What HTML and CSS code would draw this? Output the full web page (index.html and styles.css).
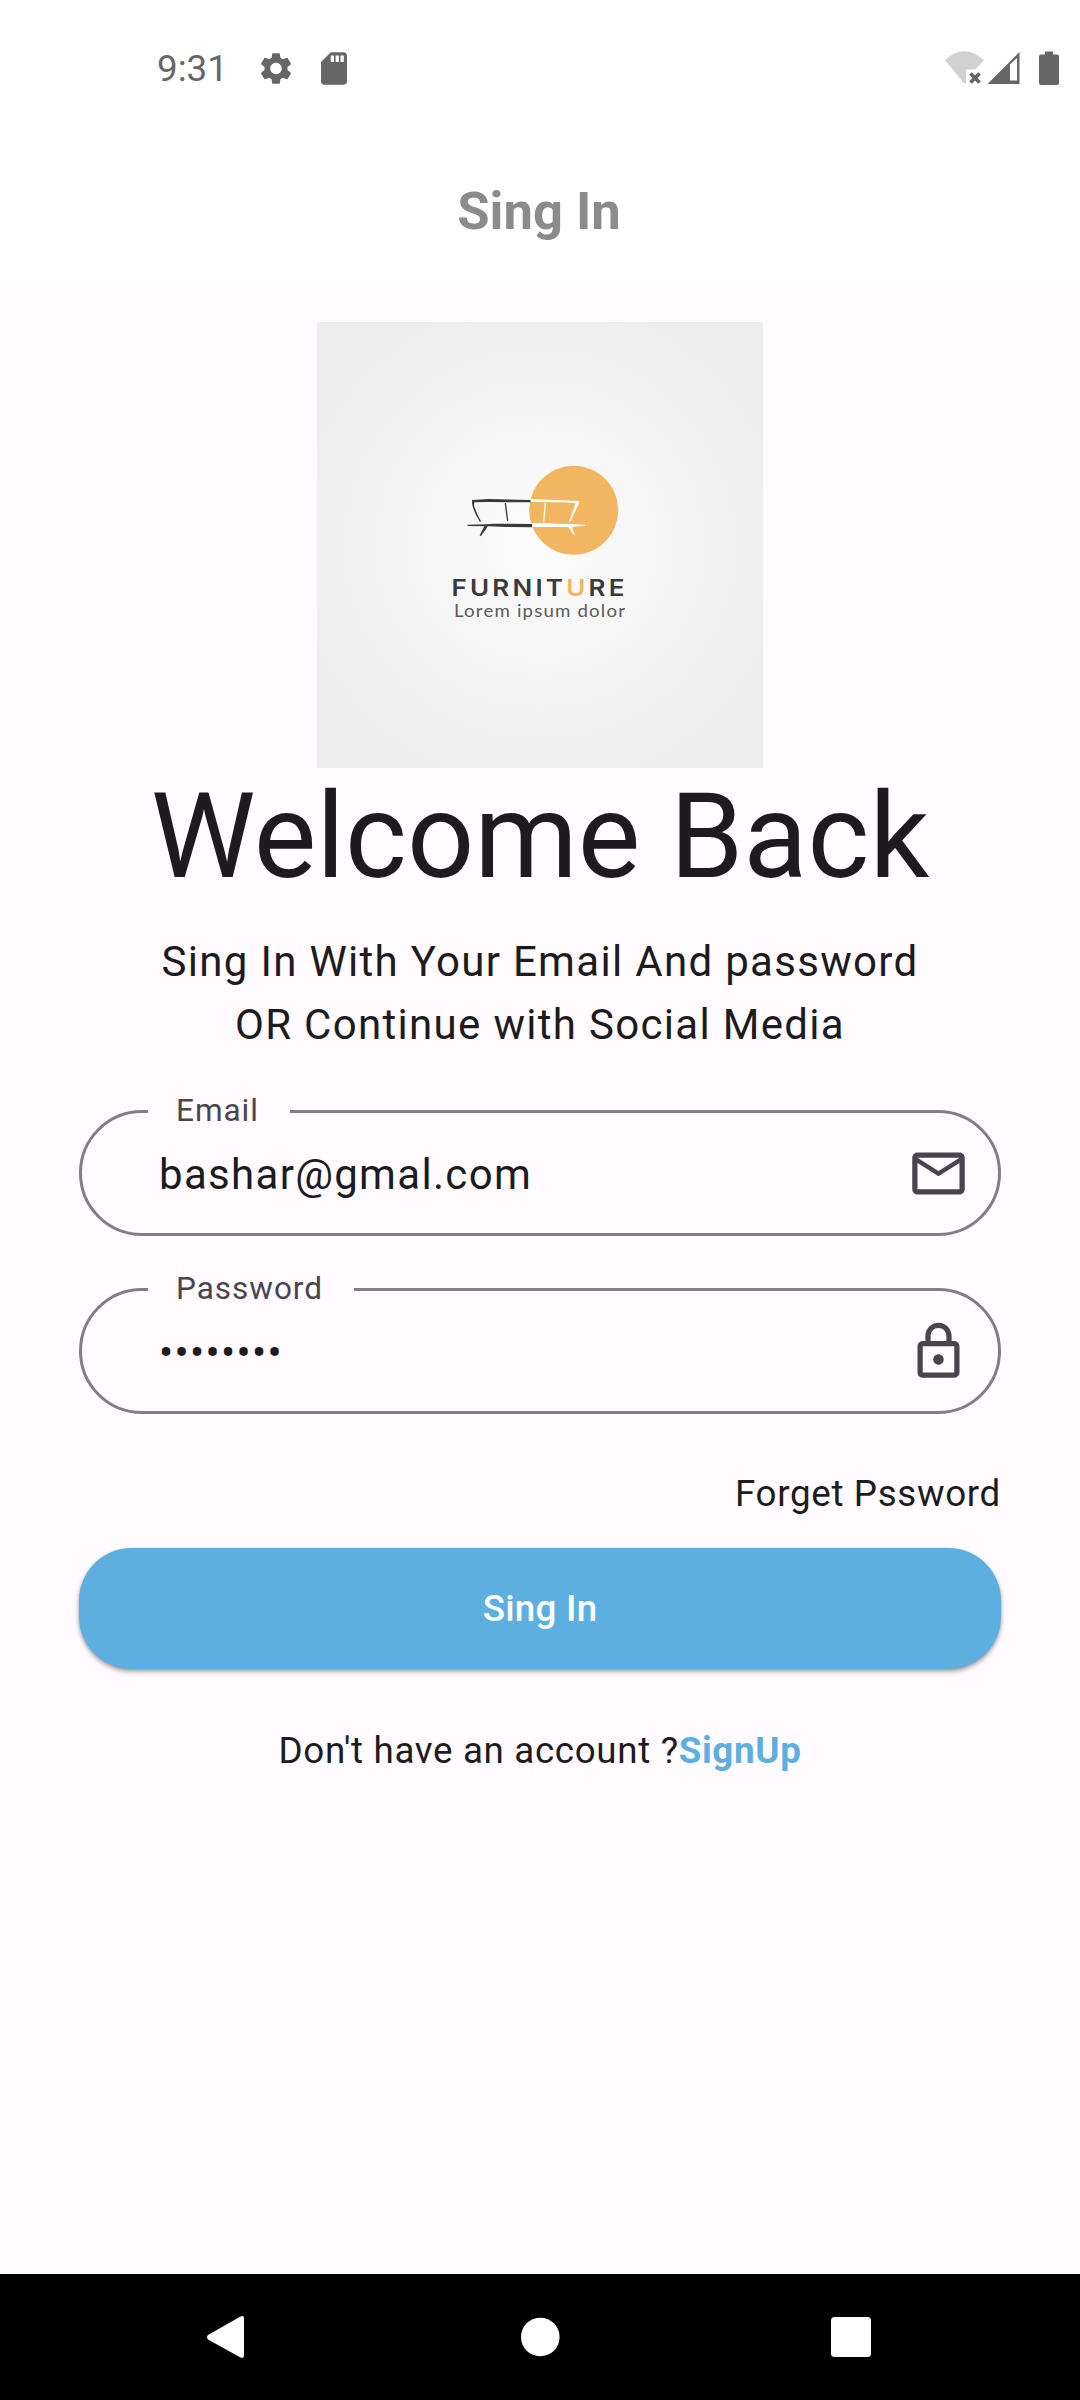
FILE: index.html
```html
<!DOCTYPE html>
<html lang="en">
<head>
<meta charset="utf-8">
<title>Sing In</title>
<link rel="stylesheet" href="styles.css">
</head>
<body>
<div class="screen">
  <header class="header">
    <div class="status-bar">
      <span class="clock">9:31</span>
      <svg class="gear" viewBox="2 2 20 20"><path d="M19.14 12.94c.04-.3.06-.61.06-.94 0-.32-.02-.64-.07-.94l2.03-1.58a.49.49 0 0 0 .12-.61l-1.92-3.32a.488.488 0 0 0-.59-.22l-2.39.96c-.5-.38-1.03-.7-1.62-.94l-.36-2.54a.484.484 0 0 0-.48-.41h-3.84c-.24 0-.43.17-.47.41l-.36 2.54c-.59.24-1.13.57-1.62.94l-2.39-.96c-.22-.08-.47 0-.59.22L2.74 8.87c-.12.21-.08.47.12.61l2.03 1.58c-.05.3-.09.63-.09.94s.02.64.07.94l-2.03 1.58a.49.49 0 0 0-.12.61l1.92 3.32c.12.22.37.29.59.22l2.39-.96c.5.38 1.03.7 1.62.94l.36 2.54c.05.24.24.41.48.41h3.84c.24 0 .44-.17.47-.41l.36-2.54c.59-.24 1.13-.56 1.62-.94l2.39.96c.22.08.47 0 .59-.22l1.92-3.32c.12-.22.07-.47-.12-.61l-2.01-1.58zM12 15.6A3.61 3.61 0 0 1 8.4 12c0-1.98 1.62-3.6 3.6-3.6s3.6 1.62 3.6 3.6-1.62 3.6-3.6 3.6z"/></svg>
      <svg class="sd-card" viewBox="4 2 16 20"><path d="M18 2h-8L4.020 8 4 20c0 1.100.9 2 2 2h12c1.100 0 2-.9 2-2V4c0-1.100-.9-2-2-2zm-6 6h-2V4h2v4zm3 0h-2V4h2v4zm3 0h-2V4h2v4z"/></svg>
      <svg class="signals" viewBox="0 0 114 34">
        <path class="faint" d="M0 9Q19-8.500 39 9L30 18.500H21V32.500H19Z"/>
        <path class="cross" d="M25.500 22.500l9 9M34.500 22.500l-9 9"/>
        <path fill-rule="evenodd" d="M42.500 33L74.500 1V33ZM65 13.500V29.500H72V7Z"/>
        <path d="M100 0.500h8v3h4q2 0 2 2v26.500q0 2-2 2H96q-2 0-2-2V5.500q0-2 2-2h4z"/>
      </svg>
    </div>
    <h1 class="title">Sing In</h1>
  </header>
  <main class="content">
    <svg class="logo" viewBox="0 0 446 446">
      <defs>
        <radialGradient id="paper" cx="50%" cy="50%" r="56%">
          <stop offset="0" stop-color="#fdfdfd"/>
          <stop offset=".5" stop-color="#f5f5f5"/>
          <stop offset="1" stop-color="#ededed"/>
        </radialGradient>
      </defs>
      <rect width="446" height="446" fill="url(#paper)"/>
      <g transform="translate(113 118) scale(.33333)">
        <circle cx="431" cy="211" r="133.500" fill="#f1b65f"/>
        <g fill="#3a3a3a">
          <path d="M126 180L175 177 302 180V187L175 186 133 187 132 196Q139 220 153 244L150 246Q130 215 126 190Z"/>
          <path d="M224 189L228 189 235 242 231 243Z"/>
          <path d="M113 254L170 253 190 251 306 252V262L230 261 173 259 169 266 152 289 149 286 163 259 113 258Z"/>
        </g>
        <g fill="#fff">
          <path d="M302 177L350 179 400 181 448 183 445 194 421 246 417 244 437 190 400 187 302 186Z"/>
          <path d="M344 189L348 190 343 245 339 245Z"/>
          <path d="M305 249L350 249 400 252 430 252 466 255 466 258 428 260 428 266 435 287 430 283 415 261 307 261Z"/>
        </g>
      </g>
      <text class="brand" transform="translate(134.500 274.300) scale(1.130 1)" textLength="153">FURNIT<tspan class="accent">U</tspan>RE</text>
      <text class="tagline" transform="translate(137 294.600) scale(1.140 1)" textLength="150">Lorem ipsum dolor</text>
    </svg>
    <h2 class="welcome">Welcome Back</h2>
    <p class="intro">Sing In With Your Email And password<br>OR Continue with Social Media</p>
    <form class="form">
      <fieldset class="field">
        <legend class="label">Email</legend>
        <span class="value">bashar@gmal.com</span>
        <svg class="field-icon" viewBox="0 0 24 24"><path d="M22 6c0-1.100-.9-2-2-2H4c-1.100 0-2 .9-2 2v12c0 1.100.9 2 2 2h16c1.100 0 2-.9 2-2V6zm-2 0l-8 5-8-5h16zm0 12H4V8l8 5 8-5v10z"/></svg>
      </fieldset>
      <fieldset class="field">
        <legend class="label">Password</legend>
        <span class="value">••••••••</span>
        <svg class="field-icon" viewBox="0 0 24 24"><path d="M18 8h-1V6c0-2.760-2.240-5-5-5S7 3.240 7 6v2H6c-1.100 0-2 .9-2 2v10c0 1.100.9 2 2 2h12c1.100 0 2-.9 2-2V10c0-1.100-.9-2-2-2zM9 6c0-1.660 1.340-3 3-3s3 1.340 3 3v2H9V6zm9 14H6V10h12v10zm-6-3c1.100 0 2-.9 2-2s-.9-2-2-2-2 .9-2 2 .9 2 2 2z"/></svg>
      </fieldset>
      <a class="forgot">Forget Pssword</a>
      <button class="submit" type="button">Sing In</button>
    </form>
    <p class="signup">Don't have an account ?<a class="signup-link">SignUp</a></p>
  </main>
  <nav class="nav-bar">
    <svg viewBox="0 0 44 44"><path d="M4 20L36.500 1.500Q40 0 40 3.500V40.500Q40 44 36.500 42.500L4 24.500Q2 22 4 20Z"/></svg>
    <svg viewBox="0 0 44 44"><circle cx="23.300" cy="22" r="19.300"/></svg>
    <svg viewBox="0 0 44 44"><rect x="2" y="2" width="40" height="40" rx="3.500"/></svg>
  </nav>
</div>
</body>
</html>
```
FILE: styles.css
```css
* { box-sizing: border-box; }
body { margin: 0; }
h1, h2, p { margin: 0; font-weight: 400; }
svg { display: block; flex: none; }

.screen {
  width: 1080px;
  height: 2400px;
  display: flex;
  flex-direction: column;
  background: #fffbff;
  color: #1d1b1e;
  font-family: Roboto, sans-serif;
}

.header { height: 282px; background: #fff; }
.status-bar {
  height: 136px;
  padding: 0 21px 0 157px;
  display: flex;
  align-items: center;
  color: #666;
  fill: #666;
}
.clock { width: 103px; font-size: 36.75px; line-height: 44px; padding-top: 1px; }
.gear { width: 32px; height: 33px; }
.sd-card { width: 26px; height: 33px; margin-left: 29px; }
.signals { width: 114px; height: 34px; margin-left: auto; }
.faint { fill: #d1d1d1; }
.cross { fill: none; stroke: #666; stroke-width: 3.8; }
.title {
  padding: 44px 2px 0 0;
  text-align: center;
  font-size: 52.5px;
  line-height: 62px;
  font-weight: 700;
  color: #8b8b8b;
}

.content { flex: 1; padding: 40px 79px 0; }
.logo { width: 446px; height: 446px; margin: 0 auto; }
.brand { font: 600 23px Inter, sans-serif; fill: #3a3a3a; }
.accent { fill: #f1b65f; }
.tagline { font: 400 16.4px Lato, sans-serif; fill: #5a5a5a; }

.welcome {
  font-size: 118.125px;
  line-height: 138px;
  text-align: center;
  white-space: nowrap;
}
.intro {
  margin-top: 24px;
  font-size: 42px;
  line-height: 63px;
  letter-spacing: 1.3125px;
  text-align: center;
}

.form { display: flex; flex-direction: column; margin-top: 38px; }
.field {
  height: 142px;
  margin: 0 0 36px;
  padding: 14px 28px 0 77px;
  min-width: 0;
  display: flex;
  align-items: flex-start;
  border: 3px solid #827d87;
  border-radius: 63px;
}
.label {
  margin-left: -11px;
  padding: 0 31px 0 28px;
  font-size: 31.5px;
  line-height: 34px;
  letter-spacing: .98px;
  color: #49454e;
}
.value { flex: 1; padding-top: 1px; font-size: 42px; line-height: 63px; letter-spacing: 1.3125px; }
.field-icon { width: 63px; height: 63px; fill: #49454e; }

.forgot {
  align-self: flex-end;
  margin-top: 18px;
  font-size: 36.75px;
  line-height: 52px;
  letter-spacing: .656px;
}
.submit {
  height: 121px;
  margin-top: 28px;
  border: 0;
  border-radius: 52.5px;
  background: #5cafde;
  box-shadow: 0 3px 5px rgba(0, 0, 0, .3), 0 1px 3px rgba(0, 0, 0, .15);
  color: #fff;
  font: 500 36.75px/52px Roboto, sans-serif;
  letter-spacing: .2625px;
}
.signup {
  margin-top: 56px;
  text-align: center;
  font-size: 36.75px;
  line-height: 52px;
  letter-spacing: .656px;
}
.signup-link { font-weight: 700; color: #5cafde; }

.nav-bar {
  height: 126px;
  display: flex;
  justify-content: space-between;
  align-items: center;
  padding: 0 207px 0 204px;
  background: #000;
  fill: #fff;
}
.nav-bar svg { width: 44px; height: 44px; }
```
